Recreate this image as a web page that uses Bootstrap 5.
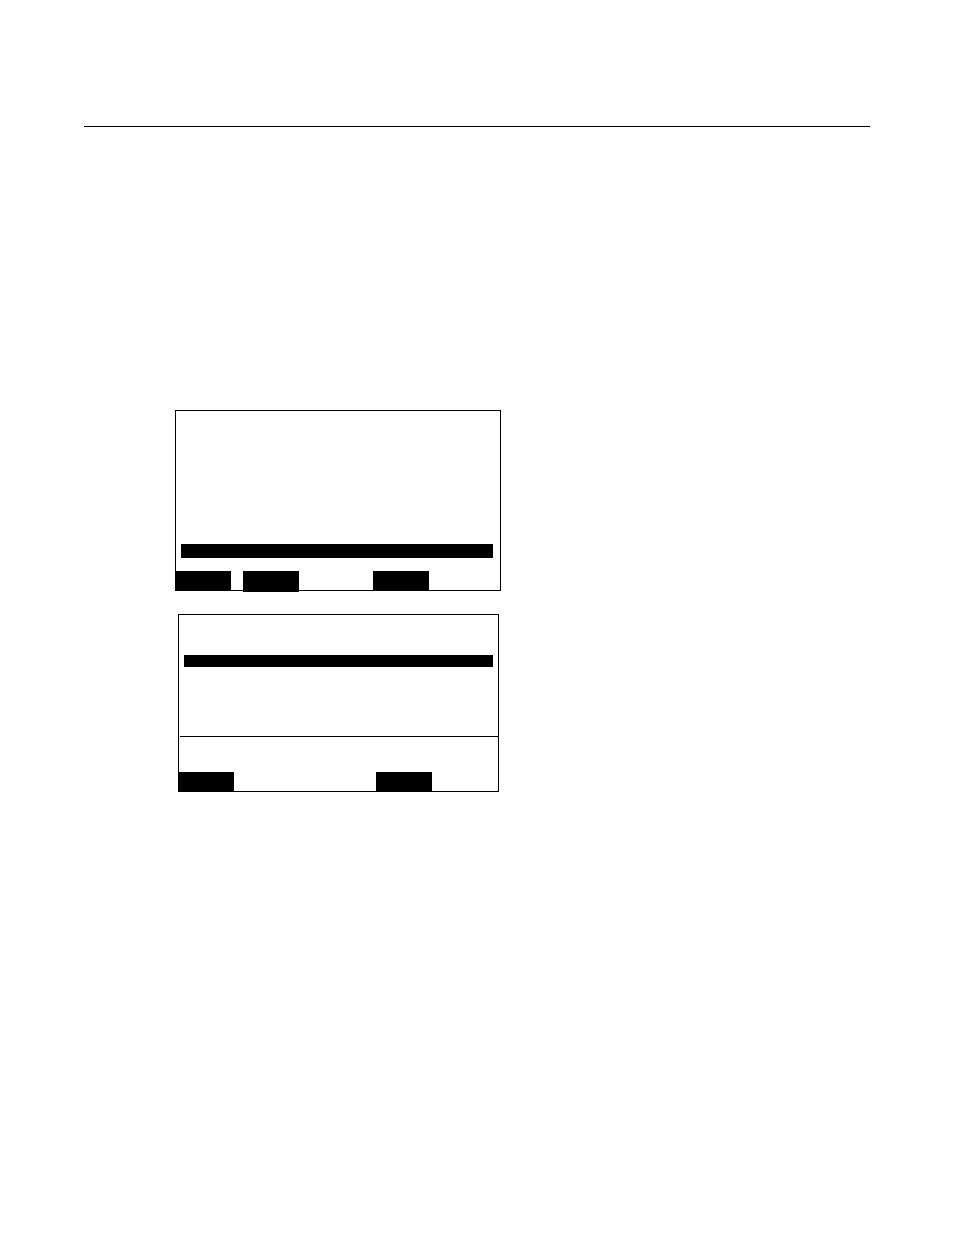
<!DOCTYPE html>
<html lang="en">
<head>
<meta charset="utf-8">
<meta name="viewport" content="width=device-width, initial-scale=1">
<title>Terminal screens</title>
<link href="https://cdn.jsdelivr.net/npm/bootstrap@5.3.0/dist/css/bootstrap.min.css" rel="stylesheet">
<style>
  body { background: #fff; font-family: "Liberation Sans", Arial, sans-serif; }
  .sheet { padding: 126px 84px 64px; }
  .sheet-rule { border-top: 1px solid #000; opacity: 1; }
  .screens { padding: 283px 0 0 91px; gap: 23px; }
  .screen { width: 100%; border: 1px solid #000; }
  .screen-list { max-width: 326px; padding-top: 133px; }
  .screen-entry { max-width: 321px; margin-left: 3px; padding-top: 40px; }
  /* highlighted row of each screen */
  .selected-row { background: #000; height: 14px; margin: 0 7px 13px 5px; }
  .screen-entry .selected-row { height: 12px; margin: 0 5px 69px; }
  .divider { border-top: 1px solid #000; opacity: 1; margin: 0 0 35px 1px; }
  /* function keys along the bottom edge */
  .keys { height: 19px; }
  .softkey { width: 56px; height: 19px; background: #000; }
  .softkey:first-child { width: 55px; }
  .softkey-tall { height: 21px; margin-left: 12px; }
  .softkey-mid { margin-left: 74px; }
  .screen-entry .softkey-mid { margin-left: 142px; }
</style>
</head>
<body>
<main class="sheet">
  <hr class="sheet-rule m-0">
  <div class="screens d-flex flex-column">
    <section class="screen screen-list">
      <div class="selected-row"></div>
      <div class="keys d-flex align-items-start">
        <div class="softkey"></div>
        <div class="softkey softkey-tall"></div>
        <div class="softkey softkey-mid"></div>
      </div>
    </section>
    <section class="screen screen-entry">
      <div class="selected-row"></div>
      <hr class="divider">
      <div class="keys d-flex align-items-start">
        <div class="softkey"></div>
        <div class="softkey softkey-mid"></div>
      </div>
    </section>
  </div>
</main>
<script src="https://cdn.jsdelivr.net/npm/bootstrap@5.3.0/dist/js/bootstrap.bundle.min.js"></script>
</body>
</html>
